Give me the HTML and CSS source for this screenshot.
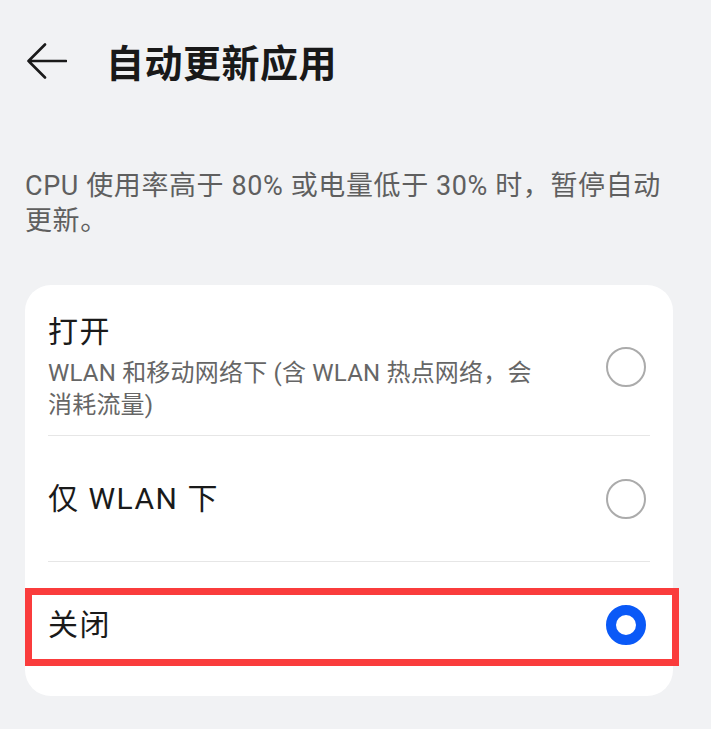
FILE: index.html
```html
<!DOCTYPE html>
<html lang="zh-CN">
<head>
    <meta charset="UTF-8">
    <meta name="viewport" content="width=device-width, initial-scale=1.0">
    <title>自动更新应用</title>
    <link rel="stylesheet" href="styles.css">
</head>
<body>
    <div class="page">
        <div class="top-bar">
            <button class="back-btn" aria-label="返回">
                <svg width="40" height="36" viewBox="0 0 40 36">
                    <path d="M18 1.5 L1.5 18 L18 34.5 M1.5 18 H39" fill="none" stroke="#1a1a1a" stroke-width="2.6" stroke-linecap="round" stroke-linejoin="round"/>
                </svg>
            </button>
            <h1 class="page-title">自动更新应用</h1>
        </div>

        <p class="desc">CPU 使用率高于 80% 或电量低于 30% 时，暂停自动更新。</p>

        <div class="card">
            <div class="option option-tall">
                <div class="option-text">
                    <div class="option-title">打开</div>
                    <div class="option-sub">WLAN 和移动网络下 (含 WLAN 热点网络，会消耗流量)</div>
                </div>
                <span class="radio"></span>
            </div>
            <div class="option">
                <div class="option-text">
                    <div class="option-title">仅 WLAN 下</div>
                </div>
                <span class="radio"></span>
            </div>
            <div class="option option-last">
                <div class="option-text">
                    <div class="option-title">关闭</div>
                </div>
                <span class="radio radio-on"></span>
                <div class="highlight"></div>
            </div>
        </div>
    </div>
</body>
</html>
```

FILE: styles.css
```css
* {
    margin: 0;
    padding: 0;
    box-sizing: border-box;
}

body {
    font-family: Roboto, "Noto Sans CJK SC", sans-serif;
    background: #f1f2f4;
    color: #1a1a1a;
    min-height: 100vh;
}

.page {
    width: 711px;
}

.top-bar {
    height: 128px;
    display: flex;
    align-items: center;
    padding-left: 27px;
}

.back-btn {
    background: none;
    border: none;
    width: 42px;
    height: 36px;
    margin-bottom: 7px;
    display: flex;
    align-items: center;
    cursor: pointer;
}

.page-title {
    margin-left: 37px;
    font-size: 38px;
    line-height: 50px;
    font-weight: 700;
    letter-spacing: 0.5px;
    color: #191919;
}

.desc {
    margin: 41px 38px 0 25px;
    font-size: 27px;
    line-height: 35px;
    letter-spacing: 0.6px;
    color: #5f5f5f;
}

.card {
    margin: 46px 38px 0 25px;
    background: #fff;
    border-radius: 26px;
    padding-bottom: 8px;
}

.option {
    margin: 0 23px;
    min-height: 126px;
    display: flex;
    align-items: center;
    border-bottom: 1px solid #e6e6e6;
    position: relative;
}

.option-tall {
    min-height: 0;
    padding: 27px 0 14px;
}

.option-last {
    border-bottom: none;
}

.option-text {
    flex: 1;
}

.option-title {
    font-size: 30px;
    line-height: 40px;
    letter-spacing: 1.5px;
    color: #1a1a1a;
}

.option-sub {
    max-width: 495px;
    margin-top: 5px;
    font-size: 24px;
    line-height: 32px;
    letter-spacing: 0.2px;
    color: #666;
}

.radio {
    width: 40px;
    height: 40px;
    margin-right: 4px;
    border-radius: 50%;
    border: 2px solid #ababab;
    flex-shrink: 0;
}

.radio-on {
    border: 10px solid #0a59f7;
}

/* annotation box over the selected row */
.highlight {
    position: absolute;
    top: 26px;
    bottom: 22px;
    left: -23px;
    right: -29px;
    border: 7px solid #fa3c3c;
}
```
